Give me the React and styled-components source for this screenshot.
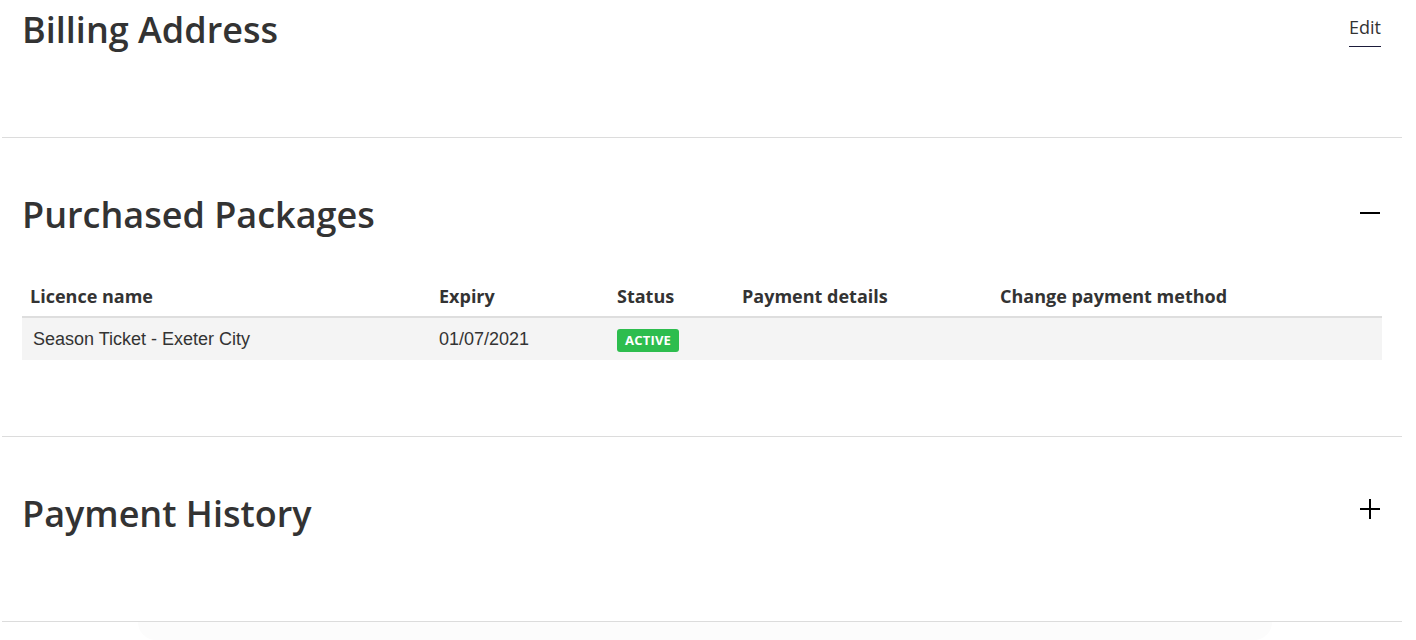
import React from "react";
import styled, { createGlobalStyle } from "styled-components";

const GlobalStyle = createGlobalStyle`
  body {
    margin: 0;
    background: #fff;
    font-family: "Open Sans", "Liberation Sans", sans-serif;
    color: #333;
  }
`;

const Page = styled.div`
  width: 1400px;
  margin-left: 2px;
`;

const Section = styled.section`
  padding: ${(p) => p.$top}px 20px ${(p) => p.$bottom}px;
  border-bottom: 1px solid #dcdcdc;
`;

const SectionHead = styled.div`
  display: flex;
  justify-content: space-between;
  align-items: center;
`;

const Title = styled.h2`
  margin: 0;
  font-size: 36px;
  font-weight: 600;
  line-height: 43px;
  color: #333;
`;

const EditLink = styled.a`
  margin-top: 2px;
  margin-right: 1px;
  font-size: 18px;
  line-height: 24px;
  color: #333;
  text-decoration: none;
  padding-bottom: 7px;
  border-bottom: 1px solid #1b1b3a;
  cursor: pointer;
`;

const Toggle = styled.button`
  position: relative;
  width: 20px;
  height: 20px;
  margin: 0 2px ${(p) => p.$lift * 2}px 0;
  padding: 0;
  border: none;
  background: none;
  cursor: pointer;

  &::before,
  &::after {
    content: "";
    position: absolute;
    background: #000;
  }

  &::before {
    left: 0;
    top: 9px;
    width: 20px;
    height: 2px;
  }

  &::after {
    display: ${(p) => (p.$open ? "none" : "block")};
    left: 9px;
    top: 0;
    width: 2px;
    height: 20px;
  }
`;

const Table = styled.div`
  margin-top: 43px;
  display: grid;
  grid-template-columns: 409px 178px 125px 258px 1fr;
`;

const HeadCell = styled.div`
  padding: 6px 8px 8px;
  font-size: 18px;
  font-weight: 700;
  line-height: 23px;
  color: #333;
  border-bottom: 2px solid #dedede;
`;

const Cell = styled.div`
  display: flex;
  align-items: center;
  height: 42px;
  padding: 0 ${(p) => (p.$first ? 11 : 8)}px;
  background: #f4f4f4;
  font-family: "Liberation Sans", Arial, sans-serif;
  font-size: 18px;
  color: #333;
`;

const Badge = styled.span`
  display: inline-block;
  margin-top: 2px;
  padding: 0 8px;
  height: 23px;
  line-height: 23px;
  border-radius: 3px;
  background: #2dbd4e;
  color: #fff;
  font-family: "Open Sans", sans-serif;
  font-size: 13px;
  font-weight: 700;
  letter-spacing: 0.2px;
`;

const Shade = styled.div`
  margin: 0 130px 0 136px;
  height: 18px;
  background: #fcfcfc;
  border-radius: 0 0 20px 20px;
`;

const columns = [
  "Licence name",
  "Expiry",
  "Status",
  "Payment details",
  "Change payment method",
];

const packages = [
  { name: "Season Ticket - Exeter City", expiry: "01/07/2021", status: "Active" },
];

export default function App() {
  return (
    <Page>
      <GlobalStyle />
      <Section $top={8} $bottom={86}>
        <SectionHead>
          <Title>Billing Address</Title>
          <EditLink>Edit</EditLink>
        </SectionHead>
      </Section>

      <Section $top={55} $bottom={76}>
        <SectionHead>
          <Title>Purchased Packages</Title>
          <Toggle $open $lift={2} aria-label="Collapse" />
        </SectionHead>
        <Table>
          {columns.map((c) => (
            <HeadCell key={c}>{c}</HeadCell>
          ))}
          {packages.map((p) => (
            <React.Fragment key={p.name}>
              <Cell $first>{p.name}</Cell>
              <Cell>{p.expiry}</Cell>
              <Cell>
                <Badge>{p.status.toUpperCase()}</Badge>
              </Cell>
              <Cell />
              <Cell />
            </React.Fragment>
          ))}
        </Table>
      </Section>

      <Section $top={55} $bottom={86}>
        <SectionHead>
          <Title>Payment History</Title>
          <Toggle $lift={5} aria-label="Expand" />
        </SectionHead>
      </Section>
      <Shade />
    </Page>
  );
}
